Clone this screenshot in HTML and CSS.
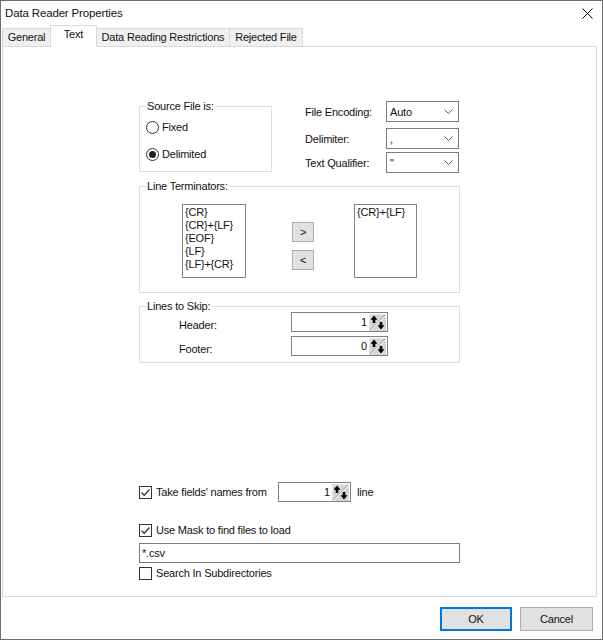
FILE: index.html
```html
<!DOCTYPE html>
<html>
<head>
<meta charset="utf-8">
<link rel="stylesheet" href="styles.css">
</head>
<body>
<div class="window">
  <div class="titlebar">
    <span class="title">Data Reader Properties</span>
    <svg class="close" width="11" height="11" viewBox="0 0 11 11"><path d="M0.5 0.5 L10.5 10.5 M10.5 0.5 L0.5 10.5" stroke="#000" stroke-width="1" fill="none"/></svg>
  </div>
  <div class="tabs">
    <div class="tab tab-general">General</div>
    <div class="tab tab-text active">Text</div>
    <div class="tab tab-drr">Data Reading Restrictions</div>
    <div class="tab tab-rej">Rejected File</div>
  </div>
  <div class="panel">
    <div class="row-top">
      <div class="group group-source">
        <div class="group-title">Source File is:</div>
        <div class="radio-row radio-fixed"><span class="radio"></span>Fixed</div>
        <div class="radio-row radio-delim"><span class="radio checked"><span class="dot"></span></span>Delimited</div>
      </div>
      <div class="fields">
        <div class="field f1"><span class="flabel">File Encoding:</span><div class="combo"><span>Auto</span><svg width="9" height="5" viewBox="0 0 9 5"><path d="M0.5 0.5 L4.5 4.5 L8.5 0.5" stroke="#5a5a5a" fill="none"/></svg></div></div>
        <div class="field f2"><span class="flabel">Delimiter:</span><div class="combo"><span>,</span><svg width="9" height="5" viewBox="0 0 9 5"><path d="M0.5 0.5 L4.5 4.5 L8.5 0.5" stroke="#5a5a5a" fill="none"/></svg></div></div>
        <div class="field f3"><span class="flabel">Text Qualifier:</span><div class="combo"><span>"</span><svg width="9" height="5" viewBox="0 0 9 5"><path d="M0.5 0.5 L4.5 4.5 L8.5 0.5" stroke="#5a5a5a" fill="none"/></svg></div></div>
      </div>
    </div>

    <div class="group group-term">
      <div class="group-title">Line Terminators:</div>
      <div class="term-row">
        <div class="listbox list-left">
          <div>{CR}</div>
          <div>{CR}+{LF}</div>
          <div>{EOF}</div>
          <div>{LF}</div>
          <div>{LF}+{CR}</div>
        </div>
        <div class="arrows">
          <div class="sbtn">&gt;</div>
          <div class="sbtn">&lt;</div>
        </div>
        <div class="listbox list-right">
          <div>{CR}+{LF}</div>
        </div>
      </div>
    </div>

    <div class="group group-skip">
      <div class="group-title">Lines to Skip:</div>
      <div class="skip-row">
        <span class="skip-label">Header:</span>
        <div class="spin spin-wide"><span class="spin-val">1</span><svg class="spin-btn" width="17" height="17" viewBox="0 0 17 17"><rect x="0" y="0" width="17" height="17" fill="#d6d6d6"/><path d="M0 0 H17 M0 0 V17" stroke="#f4f4f4"/><path d="M1 16 L16 1" stroke="#9a9a9a"/><path d="M1.5 16.5 L16.5 1.5" stroke="#ffffff"/><path d="M5 1.5 L8.5 5.8 L6.3 5.8 L6.3 9 L3.7 9 L3.7 5.8 L1.5 5.8 Z" fill="#000"/><path d="M12 15.5 L15.5 11.2 L13.3 11.2 L13.3 8 L10.7 8 L10.7 11.2 L8.5 11.2 Z" fill="#000"/></svg></div>
      </div>
      <div class="skip-row skip-second">
        <span class="skip-label">Footer:</span>
        <div class="spin spin-wide"><span class="spin-val">0</span><svg class="spin-btn" width="17" height="17" viewBox="0 0 17 17"><rect x="0" y="0" width="17" height="17" fill="#d6d6d6"/><path d="M0 0 H17 M0 0 V17" stroke="#f4f4f4"/><path d="M1 16 L16 1" stroke="#9a9a9a"/><path d="M1.5 16.5 L16.5 1.5" stroke="#ffffff"/><path d="M5 1.5 L8.5 5.8 L6.3 5.8 L6.3 9 L3.7 9 L3.7 5.8 L1.5 5.8 Z" fill="#000"/><path d="M12 15.5 L15.5 11.2 L13.3 11.2 L13.3 8 L10.7 8 L10.7 11.2 L8.5 11.2 Z" fill="#000"/></svg></div>
      </div>
    </div>

    <div class="take-row">
      <div class="check-label take-label"><span class="checkbox"><svg width="11" height="11" viewBox="0 0 11 11"><path d="M1.5 5.5 L4.2 8.2 L9.5 2.5" stroke="#333" stroke-width="1.3" fill="none"/></svg></span>Take fields' names from</div>
      <div class="spin spin-narrow"><span class="spin-val">1</span><svg class="spin-btn" width="17" height="17" viewBox="0 0 17 17"><rect x="0" y="0" width="17" height="17" fill="#d6d6d6"/><path d="M0 0 H17 M0 0 V17" stroke="#f4f4f4"/><path d="M1 16 L16 1" stroke="#9a9a9a"/><path d="M1.5 16.5 L16.5 1.5" stroke="#ffffff"/><path d="M5 1.5 L8.5 5.8 L6.3 5.8 L6.3 9 L3.7 9 L3.7 5.8 L1.5 5.8 Z" fill="#000"/><path d="M12 15.5 L15.5 11.2 L13.3 11.2 L13.3 8 L10.7 8 L10.7 11.2 L8.5 11.2 Z" fill="#000"/></svg></div>
      <span class="line-word">line</span>
    </div>

    <div class="check-label mask-row"><span class="checkbox"><svg width="11" height="11" viewBox="0 0 11 11"><path d="M1.5 5.5 L4.2 8.2 L9.5 2.5" stroke="#333" stroke-width="1.3" fill="none"/></svg></span>Use Mask to find files to load</div>
    <div class="textbox">*.csv</div>
    <div class="check-label search-row"><span class="checkbox"></span>Search In Subdirectories</div>
  </div>
  <div class="footer">
    <button class="btn btn-ok">OK</button>
    <button class="btn btn-cancel">Cancel</button>
  </div>
</div>
</body>
</html>
```
FILE: styles.css
```css
html, body {
  margin: 0;
  padding: 0;
  background: #fff;
}
body {
  font-family: "Liberation Sans", Arial, sans-serif;
  font-size: 11px;
  letter-spacing: -0.2px;
  color: #111;
}
.window {
  width: 603px;
  height: 640px;
  box-sizing: border-box;
  border: 1px solid #6f6f6f;
  background: #fff;
  display: flex;
  flex-direction: column;
}
.titlebar {
  height: 24px;
  flex: none;
  display: flex;
  align-items: center;
  justify-content: space-between;
  padding: 0 9px 0 4px;
}
.title {
  font-size: 11.5px;
  letter-spacing: -0.15px;
}
.close {
  display: block;
}
.tabs {
  height: 21px;
  flex: none;
  display: flex;
  align-items: flex-end;
  padding-left: 1px;
}
.tab {
  box-sizing: border-box;
  height: 18px;
  border: 1px solid #d9d9d9;
  border-bottom: none;
  background: #f0f0f0;
  margin-left: -1px;
  text-align: center;
  line-height: 17px;
  white-space: nowrap;
}
.tab-general { width: 49px; margin-left: 0; }
.tab-text { width: 47px; }
.tab-drr { width: 134px; }
.tab-rej { width: 74px; }
.tab.active {
  height: 22px;
  background: #fff;
  margin-bottom: -1px;
  position: relative;
  z-index: 1;
  line-height: 16px;
}
.panel {
  height: 551px;
  flex: none;
  box-sizing: border-box;
  margin: 0 5px 0 1px;
  border: 1px solid #d9d9d9;
  padding: 54px 0 0 136px;
}
.row-top {
  display: flex;
  align-items: flex-start;
  height: 72px;
}
.group {
  border: 1px solid #dcdcdc;
  box-sizing: border-box;
}
.group-title {
  display: table;
  margin: -7px 0 0 6px;
  padding: 0 1px;
  background: #fff;
  line-height: 13px;
}
.group-source {
  margin-top: 5px;
  width: 133px;
  height: 66px;
}
.radio-row {
  display: flex;
  align-items: center;
  height: 16px;
  margin-left: 6px;
}
.radio-fixed { margin-top: 6px; }
.radio-delim { margin-top: 11px; }
.radio {
  width: 13px;
  height: 13px;
  box-sizing: border-box;
  border: 1px solid #333;
  border-radius: 50%;
  margin-right: 3px;
  display: flex;
  align-items: center;
  justify-content: center;
  background: #fff;
}
.dot {
  width: 7px;
  height: 7px;
  border-radius: 50%;
  background: #222;
}
.fields {
  margin-left: 33px;
}
.field {
  display: flex;
  align-items: center;
}
.f1 { margin-bottom: 6px; }
.f2 { margin-bottom: 3px; }
.flabel {
  width: 81px;
}
.combo {
  width: 73px;
  height: 21px;
  box-sizing: border-box;
  border: 1px solid #7a7a7a;
  display: flex;
  align-items: center;
  justify-content: space-between;
  padding: 0 5px 0 3px;
}
.group-term {
  margin-top: 13px;
  width: 321px;
  height: 107px;
}
.term-row {
  display: flex;
  align-items: flex-start;
  margin: 11px 0 0 42px;
}
.listbox {
  height: 74px;
  box-sizing: border-box;
  border: 1px solid #828282;
  padding: 1px 2px;
  line-height: 13px;
}
.list-left { width: 64px; }
.list-right { width: 63px; margin-left: 40px; }
.arrows {
  display: flex;
  flex-direction: column;
  gap: 8px;
  margin: 18px 0 0 46px;
}
.sbtn {
  width: 22px;
  height: 20px;
  box-sizing: border-box;
  border: 1px solid #adadad;
  background: #e1e1e1;
  display: flex;
  align-items: center;
  justify-content: center;
}
.group-skip {
  margin-top: 13px;
  width: 321px;
  height: 57px;
}
.skip-row {
  display: flex;
  align-items: center;
  height: 20px;
  margin: -1px 0 0 39px;
}
.skip-row.skip-second {
  margin-top: 4px;
}
.skip-label {
  width: 112px;
  padding-top: 5px;
}
.spin {
  height: 20px;
  box-sizing: border-box;
  border: 1px solid #828282;
  display: flex;
  align-items: center;
  padding-right: 1px;
}
.spin-wide { width: 97px; }
.spin-narrow { width: 73px; }
.spin-val {
  flex: 1;
  text-align: right;
  padding-right: 2px;
}
.spin-btn {
  display: block;
}
.check-label {
  display: flex;
  align-items: center;
  height: 16px;
}
.checkbox {
  width: 13px;
  height: 13px;
  box-sizing: border-box;
  border: 1px solid #333;
  margin-right: 4px;
  display: flex;
  align-items: center;
  justify-content: center;
  background: #fff;
}
.checkbox svg {
  display: block;
}
.take-row {
  display: flex;
  align-items: center;
  height: 20px;
  margin-top: 119px;
}
.take-label {
  width: 139px;
}
.line-word {
  margin-left: 6px;
}
.mask-row {
  margin-top: 20px;
}
.textbox {
  margin-top: 5px;
  width: 321px;
  height: 20px;
  box-sizing: border-box;
  border: 1px solid #7a7a7a;
  padding-left: 2px;
  line-height: 18px;
}
.search-row {
  margin-top: 2px;
}
.footer {
  height: 42px;
  flex: none;
  box-sizing: border-box;
  display: flex;
  justify-content: flex-end;
  align-items: flex-start;
  gap: 8px;
  padding: 10px 9px 0 0;
}
.btn {
  height: 24px;
  box-sizing: border-box;
  border: 1px solid #adadad;
  background: #e1e1e1;
  font-family: inherit;
  font-size: 11px;
  letter-spacing: -0.2px;
  color: #111;
  padding: 0;
}
.btn-ok {
  width: 72px;
  border-color: #0078d7;
  box-shadow: inset 0 0 0 1px #0078d7;
}
.btn-cancel {
  width: 73px;
}
```
